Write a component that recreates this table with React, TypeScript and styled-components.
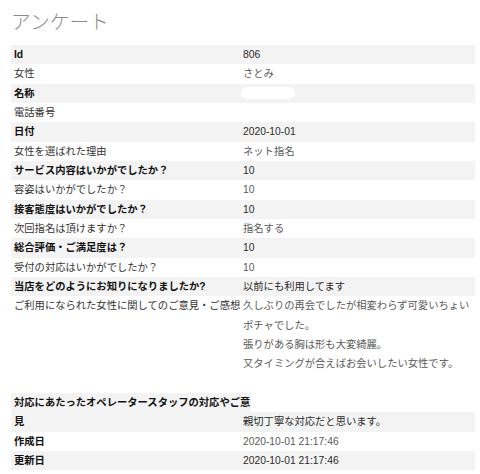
import React from "react";
import styled, { createGlobalStyle } from "styled-components";

const Global = createGlobalStyle`
  html, body { margin: 0; padding: 0; background: #fff; }
  body {
    font-family: "Liberation Sans", "Noto Sans CJK JP", Arial, sans-serif;
    font-size: 10.3px;
    color: #333;
  }
`;

const Page = styled.div`
  padding: 0 5px 0 11px;
  width: 464px;
`;

const Title = styled.h1`
  margin: 0;
  padding-top: 7px;
  height: 38px;
  font-family: "Noto Sans CJK JP", "Liberation Sans", sans-serif;
  font-size: 19.8px;
  line-height: 27px;
  font-weight: 300;
  color: #8a8a8a;
`;

const List = styled.div`
  display: flex;
  flex-direction: column;
`;

const Row = styled.div<{ $tone: "gray" | "white" }>`
  display: grid;
  grid-template-columns: 229px 1fr;
  background: ${(p) => (p.$tone === "gray" ? "#f3f3f3" : "#fff")};
  line-height: 19.33px;
  min-height: 19.33px;
`;

const Label = styled.div<{ $bold?: boolean }>`
  padding-left: 3px;
  white-space: nowrap;
  font-weight: ${(p) => (p.$bold ? 700 : 400)};
  color: ${(p) => (p.$bold ? "#111" : "#333")};
`;

const Value = styled.div<{ $dark?: boolean }>`
  padding-left: 3px;
  color: ${(p) => (p.$dark ? "#2a2a2a" : "#5a5a5a")};
`;

const Line = styled.div`
  white-space: nowrap;
`;

const Redacted = styled.span`
  display: inline-block;
  vertical-align: middle;
  width: 54px;
  height: 12px;
  margin-left: -2px;
  margin-top: -2px;
  border-radius: 6px;
  background: #fff;
`;

const Spacer = styled.div`
  height: 19.33px;
`;

const WrapHead = styled.div`
  display: inline-block;
  align-self: flex-start;
  padding: 0 1px 0 3px;
  background: #f3f3f3;
  font-weight: 700;
  color: #111;
  line-height: 19.33px;
  white-space: nowrap;
`;

type Item = { label: string; value?: React.ReactNode; lines?: string[] };

const items: Item[] = [
  { label: "Id", value: "806" },
  { label: "女性", value: "さとみ" },
  { label: "名称", value: <Redacted /> },
  { label: "電話番号", value: "" },
  { label: "日付", value: "2020-10-01" },
  { label: "女性を選ばれた理由", value: "ネット指名" },
  { label: "サービス内容はいかがでしたか？", value: "10" },
  { label: "容姿はいかがでしたか？", value: "10" },
  { label: "接客態度はいかがでしたか？", value: "10" },
  { label: "次回指名は頂けますか？", value: "指名する" },
  { label: "総合評価・ご満足度は？", value: "10" },
  { label: "受付の対応はいかがでしたか？", value: "10" },
  { label: "当店をどのようにお知りになりましたか?", value: "以前にも利用してます" },
  {
    label: "ご利用になられた女性に関してのご意見・ご感想",
    lines: [
      "久しぶりの再会でしたが相変わらず可愛いちょい",
      "ポチャでした。",
      "張りがある胸は形も大変綺麗。",
      "又タイミングが合えばお会いしたい女性です。",
    ],
  },
];

const tail: { label: string; value: string; tone: "gray" | "white"; bold: boolean }[] = [
  { label: "作成日", value: "2020-10-01 21:17:46", tone: "white", bold: true },
  { label: "更新日", value: "2020-10-01 21:17:46", tone: "gray", bold: true },
];

export default function App() {
  return (
    <>
      <Global />
      <Page>
        <Title>アンケート</Title>
        <List>
          {items.map((it, i) => {
            const gray = i % 2 === 0;
            return (
              <Row key={it.label} $tone={gray ? "gray" : "white"}>
                <Label $bold={gray}>{it.label}</Label>
                <Value $dark={gray}>
                  {it.lines ? it.lines.map((l) => <Line key={l}>{l}</Line>) : it.value}
                </Value>
              </Row>
            );
          })}
          <Spacer />
          <WrapHead>対応にあたったオペレータースタッフの対応やご意</WrapHead>
          <Row $tone="gray">
            <Label $bold>見</Label>
            <Value $dark>親切丁寧な対応だと思います。</Value>
          </Row>
          {tail.map((t) => (
            <Row key={t.label} $tone={t.tone}>
              <Label $bold={t.bold}>{t.label}</Label>
              <Value $dark={t.tone === "gray"}>{t.value}</Value>
            </Row>
          ))}
        </List>
      </Page>
    </>
  );
}
